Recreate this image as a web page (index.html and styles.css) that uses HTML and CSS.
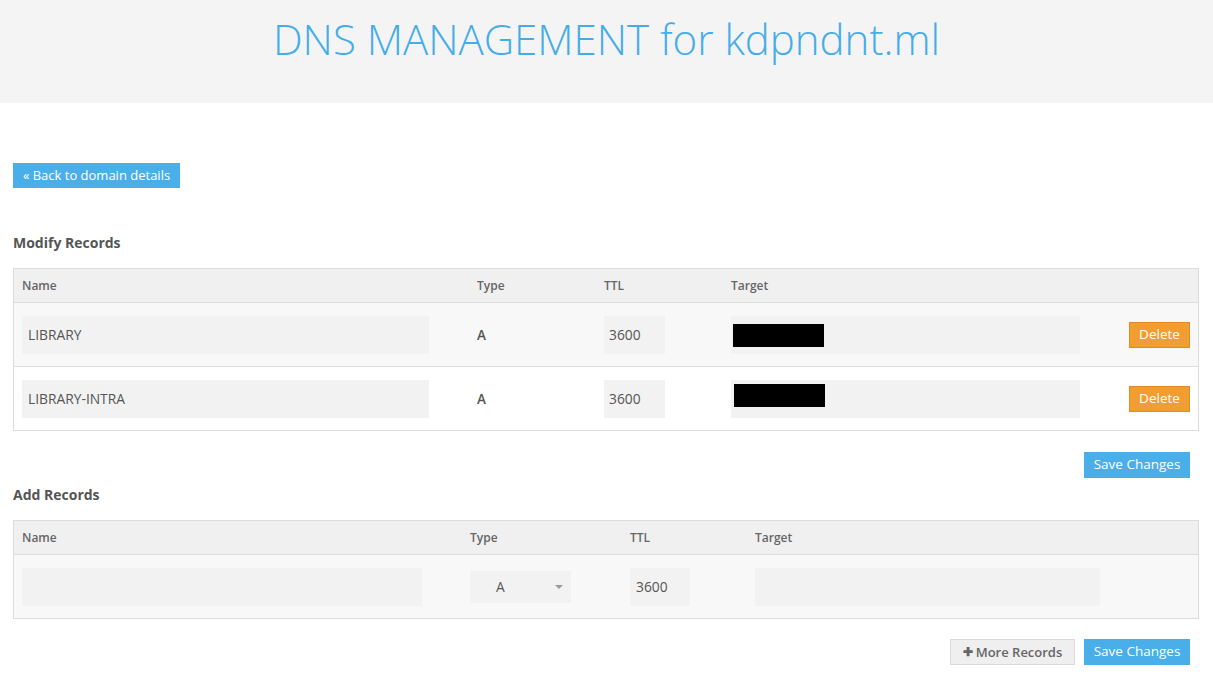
FILE: index.html
```html
<!DOCTYPE html>
<html>
<head>
<meta charset="utf-8">
<title>DNS Management</title>
<link rel="stylesheet" href="styles.css">
</head>
<body>
<header class="hero">
  <h1>DNS MANAGEMENT for kdpndnt.ml</h1>
</header>
<main class="content">
  <div class="back-row"><a class="btn btn-blue" href="#">« Back to domain details</a></div>

  <h2 class="section-title first">Modify Records</h2>
  <div class="grid grid-modify">
    <div class="cell head">Name</div>
    <div class="cell head">Type</div>
    <div class="cell head">TTL</div>
    <div class="cell head">Target</div>
    <div class="cell head"></div>

    <div class="cell odd"><div class="field name-field">LIBRARY</div></div>
    <div class="cell odd type-val">A</div>
    <div class="cell odd"><div class="field ttl-field">3600</div></div>
    <div class="cell odd"><div class="field target-field"><span class="redact"></span></div></div>
    <div class="cell odd act"><a class="btn btn-orange" href="#">Delete</a></div>

    <div class="cell even"><div class="field name-field">LIBRARY-INTRA</div></div>
    <div class="cell even type-val">A</div>
    <div class="cell even"><div class="field ttl-field">3600</div></div>
    <div class="cell even"><div class="field target-field"><span class="redact shift"></span></div></div>
    <div class="cell even act"><a class="btn btn-orange" href="#">Delete</a></div>
  </div>
  <div class="actions one"><a class="btn btn-blue btn-save" href="#">Save Changes</a></div>

  <h2 class="section-title second">Add Records</h2>
  <div class="grid grid-add">
    <div class="cell head">Name</div>
    <div class="cell head">Type</div>
    <div class="cell head">TTL</div>
    <div class="cell head">Target</div>

    <div class="cell odd"><div class="field add-name"></div></div>
    <div class="cell odd"><div class="select">A<span class="caret"></span></div></div>
    <div class="cell odd"><div class="field add-ttl">3600</div></div>
    <div class="cell odd"><div class="field add-target"></div></div>
  </div>
  <div class="actions two">
    <a class="btn btn-grey" href="#"><span class="plus">✚</span> More Records</a>
    <a class="btn btn-blue btn-save" href="#">Save Changes</a>
  </div>
</main>
</body>
</html>
```

FILE: styles.css
```css
* { box-sizing: border-box; }
html, body { margin: 0; padding: 0; background: #fff; }
body {
  font-family: "Open Sans", "Noto Sans", "Liberation Sans", sans-serif;
  font-size: 13px;
  color: #555;
}
.hero {
  background: #f4f4f4;
  height: 103px;
  display: flex;
  justify-content: center;
}
.hero h1 {
  margin: 0;
  padding-top: 11px;
  font-weight: 300;
  font-size: 42px;
  line-height: 56px;
  color: #44ade8;
}
.content { padding: 0 14px 0 13px; }
.back-row { padding-top: 60px; height: 85px; display: flex; align-items: flex-start; }
.btn {
  display: inline-flex;
  align-items: center;
  justify-content: center;
  text-decoration: none;
  font-size: 13px;
  line-height: 1;
  white-space: nowrap;
}
.btn-blue {
  background: #4aaee8;
  color: #fff;
  height: 25px;
  padding: 0 10px;
  border: 1px solid #4aaee8;
}
.back-row .btn { width: 167px; }
.btn-save { width: 106px; height: 26px; font-size: 13.5px; }
.btn-orange {
  background: #f09d32;
  border: 1px solid #e08c25;
  color: #fff;
  width: 61px;
  height: 26px;
  font-size: 13.5px;
}
.btn-grey {
  background: #efefef;
  border: 1px solid #dadada;
  color: #666;
  width: 125px;
  height: 26px;
  font-weight: 600;
}
.plus { font-size: 12px; margin-right: 3px; color: #666; }
.section-title {
  margin: 0;
  font-size: 14px;
  font-weight: 700;
  color: #555;
  line-height: 20px;
  height: 35px;
}
.section-title.first { margin-top: 45px; }
.section-title.second { margin-top: 7px; }

.grid {
  display: grid;
  border: 1px solid #dcdcdc;
  width: 1186px;
}
.grid-modify { grid-template-columns: 455px 127px 127px 398px 77px; }
.grid-add { grid-template-columns: 448px 160px 125px 451px; }
.cell {
  display: flex;
  align-items: center;
  padding: 0 8px;
  min-width: 0;
}
.cell.head {
  background: #f0f0f0;
  height: 34px;
  border-bottom: 1px solid #dcdcdc;
  font-size: 12px;
  font-weight: 600;
  color: #666;
}
.cell.odd { background: #f8f8f8; height: 63px; }
.cell.even { background: #fff; height: 64px; border-top: 1px solid #dcdcdc; }
.cell.act { justify-content: flex-end; }
.type-val { font-weight: 600; color: #555; font-size: 13.5px; }

.field {
  background: #f2f2f2;
  height: 38px;
  display: flex;
  align-items: center;
  padding: 0 6px;
  color: #555;
  font-size: 13.8px;
}
.name-field { width: 407px; }
.ttl-field { width: 61px; padding-left: 5px; }
.target-field { width: 349px; padding-left: 2px; }
.redact { display: block; width: 91px; height: 23px; background: #000; margin-top: 1px; }
.redact.shift { margin-left: 1px; margin-top: -7px; }
.add-name { width: 400px; }
.add-ttl { width: 60px; }
.add-target { width: 345px; }
.select {
  width: 101px;
  height: 32px;
  background: #f2f2f2;
  display: flex;
  align-items: center;
  padding-left: 26px;
  position: relative;
  color: #555;
  font-size: 13.8px;
}
.caret {
  position: absolute;
  right: 8px;
  top: 14px;
  width: 0; height: 0;
  border-left: 4px solid transparent;
  border-right: 4px solid transparent;
  border-top: 4px solid #999;
}
.actions {
  display: flex;
  justify-content: flex-end;
  gap: 9px;
  width: 1177px;
}
.actions.one { padding-top: 21px; height: 47px; }
.actions.two { padding-top: 20px; }
```
